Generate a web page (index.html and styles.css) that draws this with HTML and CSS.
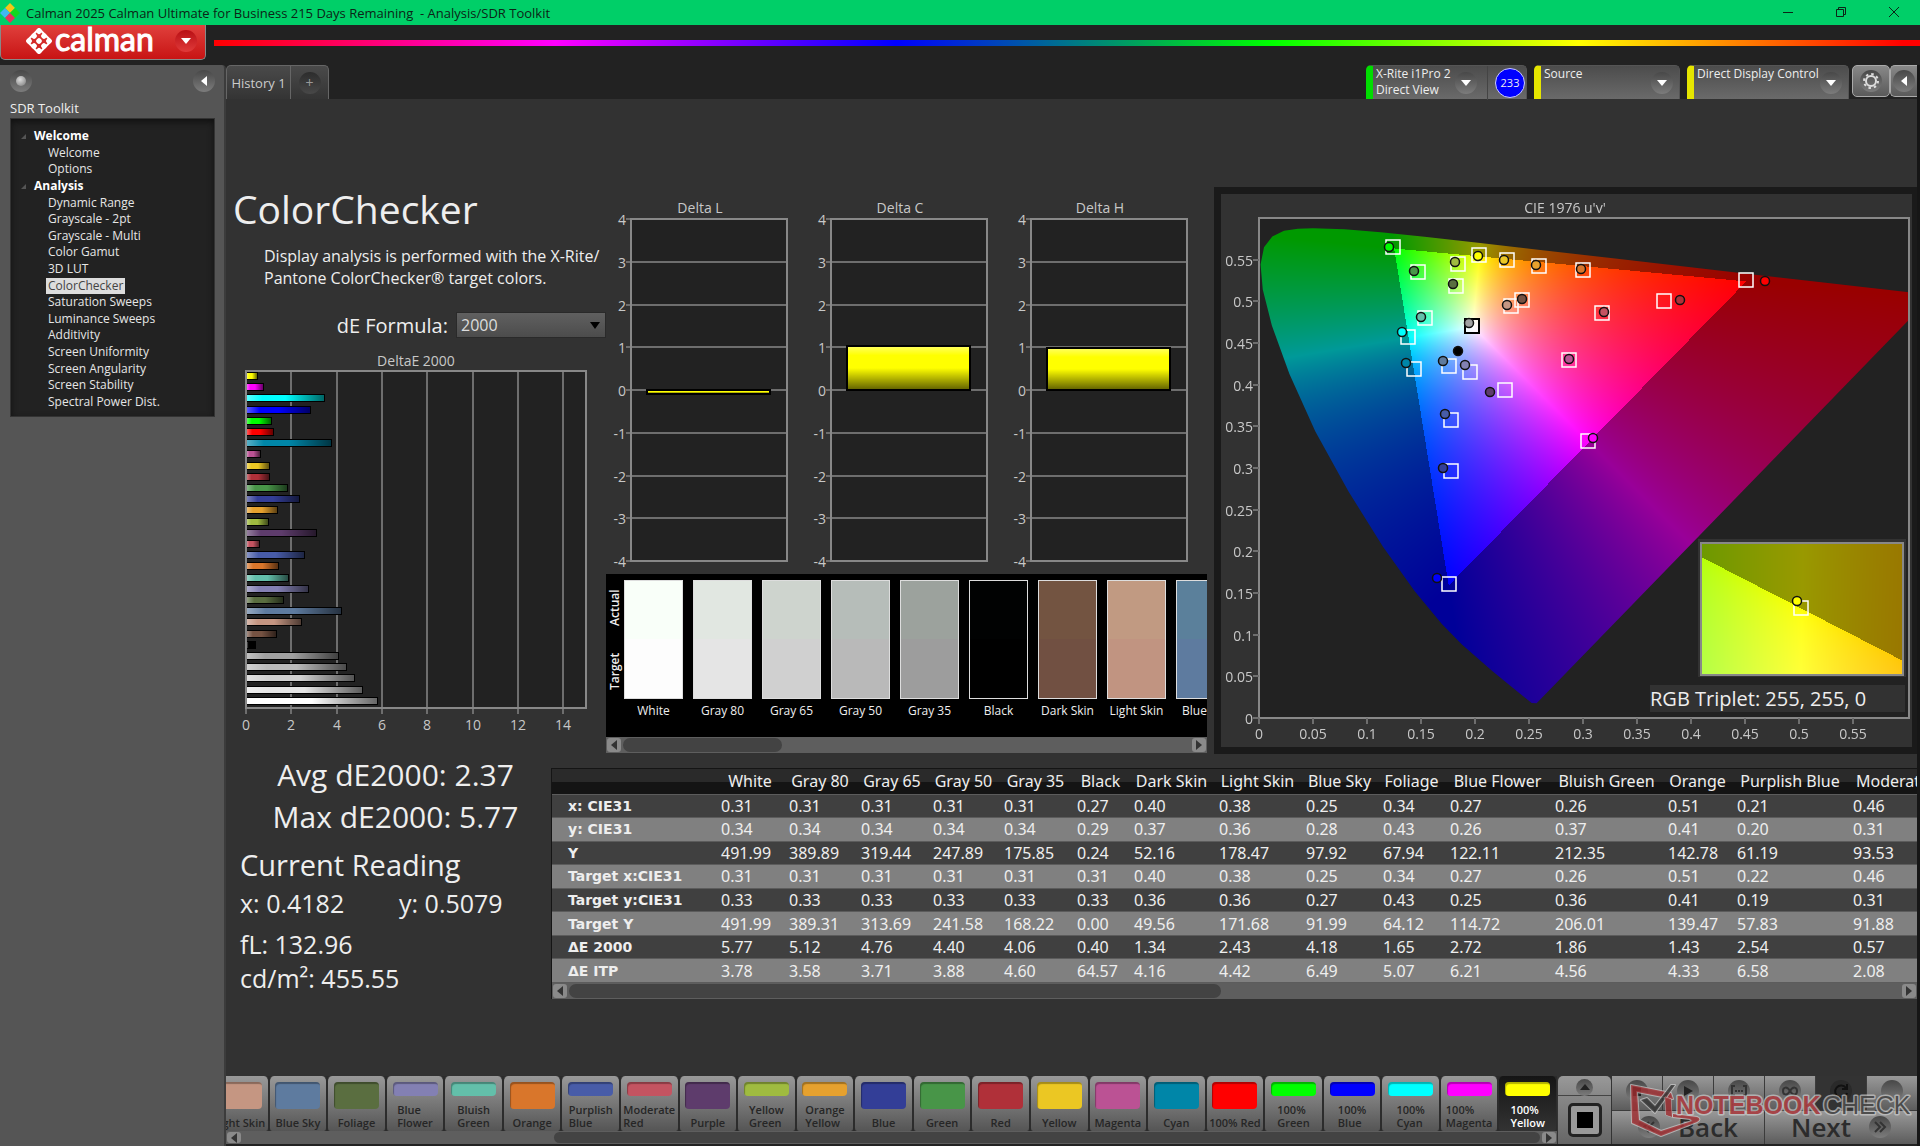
FILE: index.html
```html
<!DOCTYPE html>
<html lang="en">
<head>
  <meta charset="UTF-8" />
  <meta name="viewport" content="width=device-width, initial-scale=1.0"/>
  <title>Calman 2025 - Analysis/SDR Toolkit</title>
  <link rel="stylesheet" href="styles.css">
</head>
<body>

  <header class="titlebar">
    <svg class="app-icon" viewBox="0 0 20 20">
      <path d="M10 0l5 5-5 5-5-5z" fill="#f5c518"/>
      <path d="M5 5l5 5-5 5-5-5z" fill="#3fb8f0"/>
      <path d="M15 5l5 5-5 5-5-5z" fill="#12d820"/>
      <path d="M10 10l5 5-5 5-5-5z" fill="#e8315b"/>
    </svg>
    <span class="titlebar-text">Calman 2025 Calman Ultimate for Business 215 Days Remaining &nbsp;- Analysis/SDR Toolkit</span>
    <button class="win-btn" aria-label="Minimize"><svg viewBox="0 0 12 12"><path d="M1 6.500h10"/></svg></button>
    <button class="win-btn" aria-label="Restore"><svg viewBox="0 0 12 12"><path d="M1.500 3.500h7v7h-7zM3.500 3.500v-2h7v7h-2"/></svg></button>
    <button class="win-btn" aria-label="Close"><svg viewBox="0 0 12 12"><path d="M1 1l10 10M11 1L1 11"/></svg></button>
  </header>

  <div class="brandbar">
    <button class="brand">
      <svg class="brand-logo" viewBox="0 0 26 26">
        <g transform="rotate(45 13 13)" fill="none" stroke="#fff" stroke-width="2">
          <rect x="5" y="5" width="16" height="16" rx="1"/>
          <g fill="#fff" stroke="none">
            <rect x="4" y="4" width="5" height="5" rx="2"/><rect x="10.500" y="4" width="5" height="5" rx="2"/><rect x="17" y="4" width="5" height="5" rx="2"/>
            <rect x="4" y="10.500" width="5" height="5" rx="2"/><rect x="10.500" y="10.500" width="5" height="5" rx="2"/><rect x="17" y="10.500" width="5" height="5" rx="2"/>
            <rect x="4" y="17" width="5" height="5" rx="2"/><rect x="10.500" y="17" width="5" height="5" rx="2"/><rect x="17" y="17" width="5" height="5" rx="2"/>
          </g>
        </g>
      </svg>
      <span class="brand-name">calman</span>
      <span class="knob knob-red"><i class="down"></i></span>
    </button>
    <div class="rainbow"></div>
  </div>

  <div class="app">
    <aside class="sidebar">
      <div class="sidebar-top">
        <button class="knob knob-dot" aria-label="Pin"><i class="ball"></i></button>
        <button class="knob" aria-label="Collapse"><i class="left"></i></button>
      </div>
      <h2>SDR Toolkit</h2>
      <nav class="tree">
        <b>Welcome</b>
        <a href="#">Welcome</a>
        <a href="#">Options</a>
        <b>Analysis</b>
        <a href="#">Dynamic Range</a>
        <a href="#">Grayscale - 2pt</a>
        <a href="#">Grayscale - Multi</a>
        <a href="#">Color Gamut</a>
        <a href="#">3D LUT</a>
        <a href="#" class="selected">ColorChecker</a>
        <a href="#">Saturation Sweeps</a>
        <a href="#">Luminance Sweeps</a>
        <a href="#">Additivity</a>
        <a href="#">Screen Uniformity</a>
        <a href="#">Screen Angularity</a>
        <a href="#">Screen Stability</a>
        <a href="#">Spectral Power Dist.</a>
      </nav>
    </aside>

    <div class="workspace">
      <div class="toolbar">
        <div class="tabs">
          <button class="tab">History 1</button>
          <button class="tab tab-add" aria-label="Add"><span class="knob knob-dark">+</span></button>
        </div>
        <div class="devices">
          <div class="device device-meter">
            <span class="device-name">X-Rite i1Pro 2<br>Direct View</span>
            <button class="knob" aria-label="Meter menu"><i class="down"></i></button>
            <div class="badge"><span>233</span></div>
          </div>
          <div class="device device-source">
            <span class="device-name">Source</span>
            <button class="knob" aria-label="Source menu"><i class="down"></i></button>
          </div>
          <div class="device device-display">
            <span class="device-name">Direct Display Control</span>
            <button class="knob" aria-label="Display menu"><i class="down"></i></button>
          </div>
          <button class="tool-btn" aria-label="Settings"><span class="knob">
            <svg width="16" height="16" viewBox="0 0 16 16" fill="none" stroke="#ddd"><circle cx="8" cy="8" r="5" stroke-width="2"/><circle cx="8" cy="8" r="7" stroke-width="2" stroke-dasharray="2.500 3"/></svg>
          </span></button>
          <button class="tool-btn tool-last" aria-label="Collapse panel"><span class="knob"><i class="left"></i></span></button>
        </div>
      </div>

      <main class="page">
        <div class="row">
          <section class="intro">
            <h1>ColorChecker</h1>
            <p>Display analysis is performed with the X-Rite/<br>Pantone ColorChecker® target colors.</p>
            <div class="formula">
              <label for="formula">dE Formula:</label>
              <select id="formula"><option>2000</option><option>1976</option><option>ITP</option></select>
            </div>
            <svg class="chart" id="deltae" viewBox="0 0 373 386"></svg>
          </section>

          <section class="middle">
            <div class="deltas" id="deltas"></div>
            <div class="strip">
              <div class="strip-side"><span>Actual</span><span>Target</span></div>
              <div class="strip-list" id="strip"></div>
            </div>
            <div class="scroll">
              <button aria-label="Scroll left"><i class="left"></i></button>
              <div class="track"><div class="thumb thumb-strip"></div></div>
              <button aria-label="Scroll right"><i class="right"></i></button>
            </div>
          </section>

          <section class="cie">
            <svg class="chart" id="cie" viewBox="0 0 691 553">
              <rect class="plot" x="38" y="24" width="650" height="500"/>
              <foreignObject x="38" y="24" width="650" height="500"><canvas id="gamut" width="650" height="500"></canvas></foreignObject>
              <rect class="frame" x="38" y="24" width="650" height="500"/>
              <g id="cie-axes"></g>
              <g id="cie-points"></g>
              <rect x="477" y="345" width="208" height="138" fill="#323232"/>
              <foreignObject x="480" y="349" width="202" height="132"><canvas id="inset" width="202" height="132"></canvas></foreignObject>
              <rect class="frame" x="480" y="349" width="202" height="132"/>
              <rect class="target" x="573" y="407" width="14" height="14"/>
              <circle class="actual" cx="576" cy="407" r="4.500" fill="#ff0"/>
              <rect x="429" y="491" width="255" height="27" fill="#323232"/>
              <text class="triplet" x="429" y="512">RGB Triplet: 255, 255, 0</text>
            </svg>
          </section>
        </div>

        <div class="row">
          <section class="readings">
            <div class="big centered">Avg dE2000: 2.37</div>
            <div class="big centered">Max dE2000: 5.77</div>
            <div class="big heading">Current Reading</div>
            <div class="pair"><span>x: 0.4182</span><span>y: 0.5079</span></div>
            <div class="fl">fL: 132.96</div>
            <div>cd/m²: 455.55</div>
          </section>
          <section class="results">
            <div class="table-clip"><table id="results"></table></div>
            <div class="scroll">
              <button aria-label="Scroll left"><i class="left"></i></button>
              <div class="track"><div class="thumb thumb-table"></div></div>
              <button aria-label="Scroll right"><i class="right"></i></button>
            </div>
          </section>
        </div>
      </main>

      <footer class="bottom">
        <div class="patches">
          <div class="patch-list" id="patches"></div>
          <div class="scroll">
            <button aria-label="Scroll left"><i class="left"></i></button>
            <div class="track"><div class="thumb thumb-patches"></div></div>
            <button aria-label="Scroll right"><i class="right"></i></button>
          </div>
        </div>
        <div class="pattern">
          <button class="pattern-up" aria-label="Expand"><span class="knob"><i class="up"></i></span></button>
          <button class="pattern-window" aria-label="Window pattern"><span></span></button>
        </div>
        <div class="nav">
          <button aria-label="Stop"><span class="knob"><svg viewBox="0 0 20 20"><path d="M6 5h8v10H6z" fill="#222"/></svg></span></button>
          <button aria-label="Play"><span class="knob"><svg viewBox="0 0 20 20"><path d="M6 5l9 5-9 5z" fill="#222"/></svg></span></button>
          <button aria-label="Read series"><span class="knob"><svg viewBox="0 0 20 20"><path d="M6 5H3v9h3M14 5h3v9h-3M6 10h2M9 10h2M12 10h2" fill="none" stroke="#333" stroke-width="2"/></svg></span></button>
          <button aria-label="Continuous"><span class="knob"><svg viewBox="0 0 20 20"><path d="M10 10c-3-5-7-4-7 0s4 5 7 0 7-4 7 0-4 5-7 0" fill="none" stroke="#333" stroke-width="2"/></svg></span></button>
          <button class="on" aria-label="Refresh"><span class="knob"><svg viewBox="0 0 20 20"><path d="M15 7a6 6 0 1 0 1 5M16 3v5h-5" fill="none" stroke="#111" stroke-width="2"/></svg></span></button>
          <button aria-label="More"><span class="knob"></span></button>
          <button class="wide"><span class="knob"><svg viewBox="0 0 20 20"><path d="M10 5l-5 5 5 5M15 5l-5 5 5 5" fill="none" stroke="#333" stroke-width="2"/></svg></span>Back</button>
          <button class="wide">Next<span class="knob"><svg viewBox="0 0 20 20"><path d="M5 5l5 5-5 5M10 5l5 5-5 5" fill="none" stroke="#333" stroke-width="2"/></svg></span></button>
          <svg class="watermark" viewBox="0 0 290 60">
            <g stroke="#ccc" stroke-opacity=".7" stroke-linejoin="round" paint-order="stroke">
              <path d="M4 4l40 8 2 6-36-7 2 28 22 11 31-10-2-2-17-2v-3l24 3q5 2 0 5l-36 14L5 42z" fill="#a02c30" fill-opacity=".8" stroke-width="2"/>
              <path d="M14 19l6-2 8 8L44 4l4 0-20 28z" fill="#333" fill-opacity=".8" stroke-width="2"/>
              <path d="M38 16l6 2 1 18-6-2z" fill="#a02c30" fill-opacity=".8" stroke-width="1"/>
              <text x="49" y="33" fill="#a33034" fill-opacity=".85" stroke-width="3" class="wm-bold">NOTEBOOK</text>
              <text x="196" y="33" fill="#3a3a3a" fill-opacity=".85" stroke-width="3" class="wm-thin">CHECK</text>
            </g>
          </svg>
        </div>
      </footer>
    </div>
  </div>

  <script src="script.js"></script>
</body>
</html>
```
FILE: styles.css
```css
* {
  box-sizing: border-box;
}

body {
  margin: 0;
  height: 100vh;
  display: flex;
  flex-direction: column;
  overflow: hidden;
  background: #222;
  color: #eee;
  font-family: "Open Sans", "Liberation Sans", sans-serif;
  font-size: 12px;
}

button {
  font-family: inherit;
  color: inherit;
  padding: 0;
  border: 0;
  background: none;
  cursor: pointer;
}

/* window chrome */
.titlebar {
  display: flex;
  align-items: center;
  height: 25px;
  background: #00cf68;
  color: #0c2416;
  font-size: 13px;
}

.app-icon {
  width: 20px;
  height: 20px;
}

.titlebar-text {
  flex: 1;
  padding-left: 6px;
}

.win-btn {
  width: 53px;
  height: 25px;
}

.win-btn svg {
  width: 12px;
  height: 12px;
  fill: none;
  stroke: #0c2416;
}

.brandbar {
  display: flex;
  height: 40px;
  align-items: flex-start;
}

.brand {
  display: flex;
  align-items: center;
  width: 206px;
  height: 35px;
  padding: 0 8px 2px 24px;
  border: 1px solid #888;
  border-top: 0;
  border-radius: 0 0 5px 5px;
  background: linear-gradient(#e0403c, #c81414);
}

.brand-logo {
  width: 28px;
  height: 28px;
}

.brand-name {
  flex: 1;
  padding: 0 0 4px 2px;
  text-align: left;
  font: 400 32px/30px Lato, sans-serif;
  -webkit-text-stroke: 1px #fff;
  color: #fff;
}

.rainbow {
  flex: 1;
  height: 6px;
  margin: 15px 0 0 8px;
  background: linear-gradient(90deg, #f00, #f0f 20%, #00f 40%, #0f0 62%, #ff0 80%, #f00 99%);
}

/* round buttons and arrows */
.knob {
  display: inline-flex;
  align-items: center;
  justify-content: center;
  flex: none;
  width: 22px;
  height: 22px;
  border-radius: 50%;
  background: linear-gradient(#484848, #7c7c7c);
}

.knob-red {
  background: linear-gradient(#b80f14, #e03a3a);
}

.knob-dark {
  background: linear-gradient(#2c2c2c, #484848);
  color: #999;
  font-size: 14px;
}

.ball {
  width: 10px;
  height: 10px;
  border-radius: 50%;
  background: radial-gradient(circle at 40% 35%, #ddd, #777);
}

.down, .up, .left, .right {
  border: 5px solid transparent;
}

.down {
  border-top: 6px solid #fff;
  border-bottom: 0;
}

.up {
  border-bottom: 6px solid #222;
  border-top: 0;
}

.left {
  border-right: 6px solid #fff;
  border-left: 0;
}

.right {
  border-left: 6px solid #fff;
  border-right: 0;
}

.app {
  flex: 1;
  display: flex;
  min-height: 0;
  border-right: 3px solid #161616;
}

/* sidebar */
.sidebar {
  width: 226px;
  padding: 5px 9px 0 10px;
  background: #555;
  border-right: 2px solid #3c3c3c;
  border-radius: 0 4px 0 0;
}

.sidebar-top {
  display: flex;
  justify-content: space-between;
}

.sidebar h2 {
  margin: 6px 0 0;
  font-size: 13px;
  line-height: 20px;
  font-weight: 400;
}

.tree {
  display: grid;
  grid-auto-rows: 1fr;
  justify-items: start;
  height: 299px;
  padding: 9px 0 6px;
  background: #222;
  border: 1px solid #333;
  box-shadow: inset 0 3px 6px #111;
}

.tree a, .tree b {
  margin-left: 35px;
  padding: 0 2px;
  font-size: 12px;
  line-height: 16px;
  align-self: center;
  color: #e6e6e6;
  text-decoration: none;
}

.tree b {
  position: relative;
  margin-left: 21px;
  color: #fff;
}

.tree b::before {
  content: "";
  position: absolute;
  left: -11px;
  top: 6px;
  border-left: 5px solid transparent;
  border-bottom: 5px solid #555;
}

.tree .selected {
  background: #ddd;
  color: #444;
}

/* tabs and devices */
.workspace {
  flex: 1;
  min-width: 0;
  display: flex;
  flex-direction: column;
  background: #323232;
}

.toolbar {
  display: flex;
  justify-content: space-between;
  height: 34px;
  background: #222;
}

.tabs {
  display: flex;
}

.tab {
  width: 65px;
  border: 1px solid #666;
  border-bottom: 0;
  border-radius: 5px 0 0 0;
  background: linear-gradient(#4a4a4a, #343434);
  color: #ccc;
  font-size: 13px;
}

.tab-add {
  width: 38px;
  border-left: 0;
  border-radius: 0 5px 0 0;
}

.devices {
  display: flex;
}

.device {
  display: flex;
  align-items: flex-start;
  height: 34px;
  margin-right: 7px;
  border: 1px solid #555;
  border-left: 7px solid #e6e600;
  border-bottom: 0;
  border-radius: 5px 5px 0 0;
  background: linear-gradient(#4c4c4c, #6a6a6a);
  line-height: 16px;
}

.device-name {
  flex: 1;
  padding-left: 3px;
  white-space: nowrap;
}

.device .knob {
  margin: 6px 6px 0 0;
}

.device-meter {
  width: 161px;
  border-left-color: #0d0;
}

.device-meter .knob {
  margin-right: 10px;
}

.device-source {
  width: 146px;
}

.device-display {
  width: 162px;
  margin-right: 3px;
}

.badge {
  width: 39px;
  height: 34px;
  padding: 2px 1px 2px 7px;
  border-left: 1px solid #444;
}

.badge span {
  display: block;
  height: 30px;
  border: 1px solid #ccf;
  border-radius: 50%;
  background: #00f;
  font-size: 11px;
  line-height: 28px;
  text-align: center;
}

.tool-btn {
  width: 38px;
  height: 32px;
  border: 1px solid #aaa;
  border-radius: 5px;
  background: linear-gradient(#888, #5a5a5a);
}

.tool-last {
  width: 27px;
  border-right: 0;
  border-radius: 5px 0 0 5px;
}

/* page */
.page {
  flex: 1;
  padding: 88px 0 0 7px;
}

.row {
  display: flex;
}

.chart {
  display: block;
  width: 100%;
}

.chart text {
  font-size: 14px;
  fill: #c8c8c8;
}

.plot {
  fill: #222;
}

.frame {
  fill: none;
  stroke: #888;
  stroke-width: 2;
}

.grid {
  stroke: #6e6e6e;
  stroke-width: 2;
}

.target {
  fill: none;
  stroke: #fff;
  stroke-width: 1.5;
}

.actual {
  stroke: #111;
  stroke-width: 1.5;
}

.chart .triplet {
  font-size: 20px;
  fill: #eee;
}

canvas {
  display: block;
}

.intro {
  width: 373px;
}

.intro h1 {
  margin: 0;
  font-size: 39px;
  line-height: 44px;
  font-weight: 400;
}

.intro p {
  margin: 14px 0 23px 31px;
  font-size: 16px;
  line-height: 22px;
  white-space: nowrap;
}

.formula {
  position: relative;
  display: flex;
  justify-content: flex-end;
  align-items: center;
  height: 26px;
  margin-bottom: 12px;
  font-size: 20px;
}

.formula select {
  width: 150px;
  height: 26px;
  margin-left: 8px;
  padding: 0 4px;
  appearance: none;
  border: 1px solid #2a2a2a;
  border-radius: 0;
  background: linear-gradient(#606060, #4c4c4c);
  color: #ddd;
  font: 16px "Open Sans", sans-serif;
}

.formula::after {
  content: "";
  position: absolute;
  right: 6px;
  top: 10px;
  border: 5px solid transparent;
  border-top: 7px solid #000;
  border-bottom: 0;
}

.middle {
  width: 601px;
  margin-right: 7px;
}

.deltas {
  display: flex;
  height: 387px;
}

.deltas .chart {
  width: 200px;
  height: 387px;
}

.strip {
  display: flex;
  height: 163px;
  padding-top: 6px;
  background: #000;
}

.strip-side {
  display: flex;
  flex-direction: row-reverse;
  justify-content: space-between;
  width: 18px;
  height: 119px;
  padding: 9px 0;
  writing-mode: vertical-rl;
  transform: rotate(180deg);
}

.strip-side span {
  font-size: 12px;
  font-weight: 600;
  line-height: 18px;
}

.strip-list {
  flex: 1;
  display: flex;
  gap: 10px;
  overflow: hidden;
}

.swatch {
  flex: 0 0 59px;
  text-align: center;
  white-space: nowrap;
}

.swatch div {
  height: 119px;
  margin-bottom: 3px;
  border: 1px solid #ddd;
}

.scroll {
  display: flex;
  height: 16px;
  background: #5e5e5e;
}

.scroll button {
  width: 14px;
  height: 14px;
  margin: 1px;
  border-radius: 3px;
  background: #8a8a8a;
  display: flex;
  align-items: center;
  justify-content: center;
}

.scroll .left {
  border-right-color: #333;
}

.scroll .right {
  border-left-color: #333;
}

.track {
  flex: 1;
  padding: 1px;
}

.thumb {
  height: 14px;
  border-radius: 7px;
  background: #434343;
}

.thumb-strip {
  width: 28%;
}

.thumb-table {
  width: 49%;
}

.thumb-patches {
  width: 76%;
  margin-left: 24%;
}

.cie {
  flex: 1;
  min-width: 0;
  border: 7px solid #1a1a1a;
  border-right-width: 5px;
}

/* readings */
.readings {
  width: 318px;
  padding-left: 7px;
  font-size: 25px;
  line-height: 34px;
}

.big {
  font-size: 30px;
  line-height: 42px;
}

.centered {
  text-align: center;
}

.heading {
  margin-top: 6px;
  font-size: 29px;
}

.pair {
  display: grid;
  grid-template-columns: 159px 1fr;
}

.fl {
  margin-top: 7px;
}

.results {
  flex: 1;
  min-width: 0;
  margin-top: 14px;
  border: 1px solid #151515;
  border-width: 1px 0 0 1px;
}

.table-clip {
  overflow: hidden;
}

.results table {
  width: 1420px;
  height: 214px;
  table-layout: fixed;
  border-collapse: collapse;
  font-family: "Noto Sans", sans-serif;
  font-size: 16px;
  line-height: 20px;
}

.results td, .results th {
  padding: 0 3px;
  white-space: nowrap;
  border-bottom: 1px solid #5c5c5c;
}

.results thead {
  background: linear-gradient(#2a2a2a 50%, #141414 50%);
}

.results thead th {
  height: 25px;
  padding: 0 4px 0 0;
  font-weight: 400;
}

.results tbody th {
  padding-left: 16px;
  text-align: left;
  font-family: "DejaVu Sans", sans-serif;
  font-size: 14px;
}

.results tbody tr {
  background: #404040;
}

.results tbody tr:nth-child(even) {
  background: #808080;
}

/* bottom bar */
.bottom {
  display: flex;
  height: 70px;
  border-bottom: 2px solid #222;
}

.patches {
  flex: 1;
  min-width: 0;
}

.patch-list {
  display: flex;
  justify-content: flex-end;
  height: 55px;
  overflow: hidden;
  background: #2c2c2c;
}

.patches .scroll {
  height: 13px;
}

.patches .scroll button, .patches .thumb {
  height: 11px;
}

.patch {
  flex: 0 0 4.4%;
  display: flex;
  flex-direction: column;
  align-items: center;
  justify-content: space-between;
  padding: 6px 0 2px;
  border: 1px solid #2c2c2c;
  border-width: 0 1px;
  border-radius: 5px 5px 3px 3px;
  background: linear-gradient(#999, #555);
  color: #262626;
  font-size: 11px;
  line-height: 13px;
  font-weight: 600;
  text-align: left;
  white-space: nowrap;
}

.patch i {
  flex: 1;
  width: 45px;
  margin-bottom: 7px;
  border-radius: 4px;
  box-shadow: inset 1px 2px 1px rgba(0, 0, 0, .3);
}

.patch.current {
  background: linear-gradient(#151515, #333);
  color: #fff;
}

.pattern {
  width: 55px;
  display: flex;
  flex-direction: column;
  border: 1px solid #333;
  border-width: 0 1px;
}

.pattern-up {
  height: 20px;
  border-radius: 5px 5px 0 0;
  border-bottom: 1px solid #444;
  background: linear-gradient(#999, #888);
}

.pattern-up .knob {
  width: 17px;
  height: 17px;
}

.pattern-window {
  flex: 1;
  display: flex;
  align-items: center;
  justify-content: center;
  background: linear-gradient(#888, #666);
}

.pattern-window span {
  width: 34px;
  height: 34px;
  border: 3px solid #222;
  border-radius: 5px;
  background: linear-gradient(#000, #000) center / 16px 16px no-repeat #999;
}

.nav {
  position: relative;
  display: grid;
  grid-template-columns: repeat(6, 1fr);
  grid-template-rows: 1fr 1fr;
  gap: 1px;
  width: 305px;
  background: #3c3c3c;
}

.nav button {
  background: linear-gradient(#999, #5c5c5c);
}

.nav svg {
  width: 20px;
  height: 20px;
}

.nav .on {
  background: #333;
}

.nav .on .knob {
  background: #2a2a2a;
}

.nav .wide {
  grid-column: span 3;
  display: flex;
  align-items: center;
  justify-content: center;
  gap: 18px;
  color: #2c2c2c;
  font-size: 26px;
  font-weight: 600;
  line-height: 30px;
}

.nav .watermark {
  position: absolute;
  right: 0;
  top: 5px;
  width: 290px;
  height: 60px;
}

.wm-bold {
  font: 700 25px "Liberation Sans", sans-serif;
}

.wm-thin {
  font: 400 25px "Liberation Sans", sans-serif;
}
```
FILE: script.js
```js
const NAMES = ["White", "Gray 80", "Gray 65", "Gray 50", "Gray 35", "Black", "Dark Skin", "Light Skin", "Blue Sky",
  "Foliage", "Blue Flower", "Bluish Green", "Orange", "Purplish Blue", "Moderate Red"];

const ROWS = {
  "x: CIE31": "0.31 0.31 0.31 0.31 0.31 0.27 0.40 0.38 0.25 0.34 0.27 0.26 0.51 0.21 0.46",
  "y: CIE31": "0.34 0.34 0.34 0.34 0.34 0.29 0.37 0.36 0.28 0.43 0.26 0.37 0.41 0.20 0.31",
  "Y": "491.99 389.89 319.44 247.89 175.85 0.24 52.16 178.47 97.92 67.94 122.11 212.35 142.78 61.19 93.53",
  "Target x:CIE31": "0.31 0.31 0.31 0.31 0.31 0.31 0.40 0.38 0.25 0.34 0.27 0.26 0.51 0.22 0.46",
  "Target y:CIE31": "0.33 0.33 0.33 0.33 0.33 0.33 0.36 0.36 0.27 0.43 0.25 0.36 0.41 0.19 0.31",
  "Target Y": "491.99 389.31 313.69 241.58 168.22 0.00 49.56 171.68 91.99 64.12 114.72 206.01 139.47 57.83 91.88",
  "ΔE 2000": "5.77 5.12 4.76 4.40 4.06 0.40 1.34 2.43 4.18 1.65 2.72 1.86 1.43 2.54 0.57",
  "ΔE ITP": "3.78 3.58 3.71 3.88 4.60 64.57 4.16 4.42 6.49 5.07 6.21 4.56 4.33 6.58 2.08"
};
const COLS = [166, 68, 72, 72, 71, 73, 57, 85, 87, 77, 67, 105, 113, 69, 116, 122];

const byId = id => document.getElementById(id);

// results table
byId("results").innerHTML =
  "<colgroup>" + COLS.map(w => `<col style="width:${w}px">`).join("") + "</colgroup>" +
  "<thead><tr><th></th>" + NAMES.map(n => `<th scope="col">${n}</th>`).join("") + "</tr></thead><tbody>" +
  Object.entries(ROWS).map(([name, vals]) =>
    `<tr><th scope="row">${name}</th>` + vals.split(" ").map(v => `<td>${v}</td>`).join("") + "</tr>").join("") +
  "</tbody>";

// dE bars, top to bottom
const BARS = [["#ffff00", .5], ["#ff00ff", .74], ["#00ffff", 3.42], ["#0000ff", 2.83], ["#00ff00", 1.1], ["#ff0000", 1.17],
  ["#0086a8", 3.77], ["#bb5294", .63], ["#ebc723", 1], ["#b03039", 1], ["#489548", 1.8], ["#333e97", 2.34],
  ["#e6a12e", 1.37], ["#9fbb40", .95], ["#5e3c6c", 3.07], ["#c45461", .57], ["#485ca8", 2.54], ["#d9762b", 1.43],
  ["#63bfaa", 1.86], ["#8380b3", 2.72], ["#5a6e40", 1.65], ["#5e7b9f", 4.18], ["#c59682", 2.43], ["#755242", 1.34],
  ["#000000", .4], ["#a0a0a0", 4.06], ["#bababa", 4.4], ["#d0d0d0", 4.76], ["#e6e6e6", 5.12], ["#ffffff", 5.77]];

let s = `<defs>
  <linearGradient id="shade"><stop offset="0" stop-color="#fff" stop-opacity=".35"/><stop offset=".2" stop-color="#fff" stop-opacity="0"/>
  <stop offset=".5" stop-color="#000" stop-opacity="0"/><stop offset="1" stop-color="#000" stop-opacity=".6"/></linearGradient>
  <linearGradient id="shadeY" x2="0" y2="1"><stop offset="0" stop-color="#fff" stop-opacity=".35"/><stop offset=".2" stop-color="#fff" stop-opacity="0"/>
  <stop offset=".5" stop-color="#000" stop-opacity="0"/><stop offset="1" stop-color="#000" stop-opacity=".6"/></linearGradient></defs>
  <text x="183" y="16" text-anchor="middle">DeltaE 2000</text><rect class="plot" x="13" y="21" width="340" height="337"/>`;
for (let v = 0; v <= 14; v += 2) {
  const x = Math.round(13 + v * 340 / 15);
  s += `<path class="grid" d="M${x} 21V364"/><text x="${x}" y="380" text-anchor="middle">${v}</text>`;
}
s += `<rect class="frame" x="13" y="21" width="340" height="337"/>`;
BARS.forEach(([c, v], i) => {
  const y = Math.round(22 + i * 11.2), w = Math.round(v * 340 / 15);
  s += `<rect x="14" y="${y}" width="${w}" height="8" fill="#000"/><rect x="14" y="${y + 1}" width="${w - 1}" height="6" fill="${c}"/>
    <rect x="14" y="${y + 1}" width="${w - 1}" height="6" fill="url(#shade)"/>`;
});
byId("deltae").innerHTML = s;

// Delta L / C / H
byId("deltas").innerHTML = [["Delta L", -.08], ["Delta C", 1.02], ["Delta H", .98]].map(([name, v]) => {
  let g = `<svg class="chart" viewBox="0 0 200 387"><text x="94" y="26" text-anchor="middle">${name}</text>
    <rect class="plot" x="25" y="32" width="156" height="342"/>`;
  for (let t = 4; t >= -4; t--) {
    const y = Math.round(203 - t * 342 / 8);
    g += `<path class="grid" d="M20 ${y}H181"/><text x="20" y="${y + 6}" text-anchor="end">${t}</text>`;
  }
  const top = v > 0 ? Math.round(203 - v * 43) : 203, h = Math.max(Math.round(Math.abs(v) * 43), 4);
  return g + `<rect class="frame" x="25" y="32" width="156" height="342"/>
    <rect x="41" y="${top}" width="123" height="${h}" fill="#ff0" stroke="#000" stroke-width="2"/>
    <rect x="42" y="${top + 1}" width="121" height="${h - 2}" fill="url(#shadeY)"/></svg>`;
}).join("");

// actual / target swatches
const SWATCHES = [["#f9fff9", "#fdfdfd"], ["#e1e7e1", "#e5e5e5"], ["#ced4ce", "#d0d0d0"], ["#b6bdb9", "#b9b9b9"],
  ["#9ca29d", "#9d9d9d"], ["#010202", "#000000"], ["#735441", "#715042"], ["#c19a82", "#c19481"], ["#5b809b", "#5e7b9f"]];
byId("strip").innerHTML = SWATCHES.map(([a, t], i) =>
  `<div class="swatch"><div style="background:linear-gradient(${a} 50%, ${t} 50%)"></div>${NAMES[i]}</div>`).join("");

// patch buttons
const PATCHES = [["Light Skin", "#c59682"], ["Blue Sky", "#5e7b9f"], ["Foliage", "#5a6e40"], ["Blue<br>Flower", "#8380b3"],
  ["Bluish<br>Green", "#63bfaa"], ["Orange", "#d9762b"], ["Purplish<br>Blue", "#485ca8"], ["Moderate<br>Red", "#c45461"],
  ["Purple", "#5e3c6c"], ["Yellow<br>Green", "#9fbb40"], ["Orange<br>Yellow", "#e6a12e"], ["Blue", "#333e97"],
  ["Green", "#489548"], ["Red", "#b03039"], ["Yellow", "#ebc723"], ["Magenta", "#bb5294"], ["Cyan", "#0086a8"],
  ["100% Red", "#ff0000"], ["100%<br>Green", "#00ff00"], ["100%<br>Blue", "#0000ff"], ["100%<br>Cyan", "#00ffff"],
  ["100%<br>Magenta", "#ff00ff"], ["100%<br>Yellow", "#ffff00"]];
byId("patches").innerHTML = PATCHES.map(([n, c], i) =>
  `<button class="patch${i === PATCHES.length - 1 ? " current" : ""}"><i style="background:${c}"></i><span>${n}</span></button>`).join("");

// CIE 1976 diagram
const LOCUS = [[.1741, .005], [.1714, .0051], [.1644, .0109], [.1566, .0177], [.144, .0297], [.1355, .0399], [.1241, .0578],
  [.1096, .0868], [.0913, .1327], [.0687, .2007], [.0454, .295], [.0235, .4127], [.0082, .5384], [.0039, .6548], [.0139, .7502],
  [.0389, .812], [.0743, .8338], [.1142, .8262], [.1547, .8059], [.2296, .7543], [.3016, .6923], [.3731, .6245], [.4441, .5547],
  [.5125, .4866], [.5752, .4242], [.627, .3725], [.6658, .334], [.6915, .3083], [.7079, .292], [.719, .2809], [.7347, .2653]]
  .map(([x, y]) => [4 * x / (3 - 2 * x + 12 * y), 9 * y / (3 - 2 * x + 12 * y)]);

function color(u, v, gamma) {
  const X = 9 * u / (4 * v), Z = (12 - 3 * u - 20 * v) / (4 * v);
  const lin = [3.2406 * X - 1.5372 - .4986 * Z, -.9689 * X + 1.8758 + .0415 * Z, .0557 * X - .204 + 1.057 * Z];
  const inside = Math.min(...lin) >= 0;
  const max = Math.max(...lin);
  return lin.map(c => 255 * Math.pow(Math.max(c, 0) / max, 1 / gamma) * (inside ? 1 : .6));
}

function paint(canvas, gamma, toUV) {
  const ctx = canvas.getContext("2d");
  const img = ctx.createImageData(canvas.width, canvas.height);
  for (let y = 0, i = 0; y < canvas.height; y++) {
    for (let x = 0; x < canvas.width; x++, i += 4) {
      const [u, v] = toUV(x + .5, y + .5);
      const c = color(u, v, gamma);
      img.data[i] = c[0];
      img.data[i + 1] = c[1];
      img.data[i + 2] = c[2];
      img.data[i + 3] = 255;
    }
  }
  ctx.putImageData(img, 0, 0);
  return ctx;
}

const gamut = paint(byId("gamut"), 1.1, (x, y) => [x / 1081, (499 - y) / 833]);
gamut.globalCompositeOperation = "destination-in";
gamut.beginPath();
LOCUS.forEach(([u, v]) => gamut.lineTo(u * 1081, 499 - v * 833));
gamut.fill();

paint(byId("inset"), 2, (x, y) => [.2039 + (x - 101) / 3000, .5529 - (y - 66) / 12700]);

let axes = `<text x="344" y="19" text-anchor="middle">CIE 1976 u'v'</text>`;
for (let i = 0; i <= 11; i++) {
  const label = +(i * .05).toFixed(2), x = Math.round(38 + i * 54), y = Math.round(524 - i * 41.66);
  axes += `<path class="grid" d="M${x} 524v6M32 ${y}h6"/><text x="${x}" y="545" text-anchor="middle">${label}</text>
    <text x="32" y="${y + 6}" text-anchor="end">${label}</text>`;
}
byId("cie-axes").innerHTML = axes;

const TARGETS = [[134, 30], [220, 38], [248, 43], [280, 49], [324, 53], [487, 63], [405, 84], [159, 55], [199, 47], [197, 69],
  [263, 83], [252, 89], [343, 96], [166, 101], [149, 120], [155, 152], [190, 149], [211, 155], [310, 143], [246, 173],
  [192, 203], [329, 224], [192, 254], [190, 367]];
const ACTUALS = [[130, 30, "#0f0"], [219, 39, "#ff0"], [245, 43, "#ebc723"], [277, 48, "#e6a12e"], [322, 52, "#d9762b"],
  [506, 64, "#f00"], [421, 83, "#b03039"], [155, 54, "#489548"], [196, 45, "#9fbb40"], [194, 67, "#5a6e40"], [263, 82, "#755242"],
  [248, 88, "#c59682"], [345, 95, "#c45461"], [162, 100, "#63bfaa"], [210, 106, "#a0a0a0"], [143, 115, "#0ff"],
  [147, 146, "#0086a8"], [199, 134, "#000"], [184, 144, "#5e7b9f"], [206, 148, "#8380b3"], [231, 175, "#5e3c6c"],
  [310, 142, "#bb5294"], [186, 197, "#485ca8"], [334, 221, "#f0f"], [184, 251, "#333e97"], [178, 361, "#00f"]];
byId("cie-points").innerHTML =
  TARGETS.map(([x, y]) => `<rect class="target" x="${x + 31}" y="${y + 16}" width="14" height="14"/>`).join("") +
  `<rect x="244" y="125" width="14" height="14" fill="#fff" fill-opacity=".6" stroke="#000" stroke-width="2"/>` +
  ACTUALS.map(([x, y, c]) => `<circle class="actual" cx="${x + 38}" cy="${y + 23}" r="4.500" fill="${c}"/>`).join("");
```
